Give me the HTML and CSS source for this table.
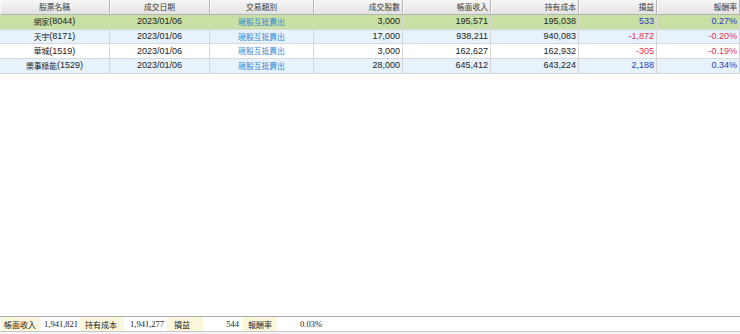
FILE: index.html
```html
<!DOCTYPE html>
<html lang="zh-Hant">
<head>
<meta charset="utf-8">
<title>現股互抵</title>
<link rel="stylesheet" href="styles.css">
</head>
<body>
<div class="page">
  <div class="grid">
    <div class="row head">
      <div class="cell c"><span class="cj">股票名稱</span></div>
      <div class="cell c"><span class="cj">成交日期</span></div>
      <div class="cell c"><span class="cj">交易類別</span></div>
      <div class="cell r"><span class="cj">成交股數</span></div>
      <div class="cell r"><span class="cj">帳面收入</span></div>
      <div class="cell r"><span class="cj">持有成本</span></div>
      <div class="cell r"><span class="cj">損益</span></div>
      <div class="cell r"><span class="cj">報酬率</span></div>
    </div>
    <div class="row sel">
      <div class="cell c"><span class="cj">網家</span>(8044)</div>
      <div class="cell c">2023/01/06</div>
      <div class="cell c link"><span class="cj">現股互抵賣出</span></div>
      <div class="cell r">3,000</div>
      <div class="cell r">195,571</div>
      <div class="cell r">195,038</div>
      <div class="cell r pos">533</div>
      <div class="cell r pos">0.27%</div>
    </div>
    <div class="row alt">
      <div class="cell c"><span class="cj">天宇</span>(8171)</div>
      <div class="cell c">2023/01/06</div>
      <div class="cell c link"><span class="cj">現股互抵賣出</span></div>
      <div class="cell r">17,000</div>
      <div class="cell r">938,211</div>
      <div class="cell r">940,083</div>
      <div class="cell r neg">-1,872</div>
      <div class="cell r neg">-0.20%</div>
    </div>
    <div class="row">
      <div class="cell c"><span class="cj">華城</span>(1519)</div>
      <div class="cell c">2023/01/06</div>
      <div class="cell c link"><span class="cj">現股互抵賣出</span></div>
      <div class="cell r">3,000</div>
      <div class="cell r">162,627</div>
      <div class="cell r">162,932</div>
      <div class="cell r neg">-305</div>
      <div class="cell r neg">-0.19%</div>
    </div>
    <div class="row alt">
      <div class="cell c"><span class="cj">樂事綠能</span>(1529)</div>
      <div class="cell c">2023/01/06</div>
      <div class="cell c link"><span class="cj">現股互抵賣出</span></div>
      <div class="cell r">28,000</div>
      <div class="cell r">645,412</div>
      <div class="cell r">643,224</div>
      <div class="cell r pos">2,188</div>
      <div class="cell r pos">0.34%</div>
    </div>
  </div>
  <div class="spacer"></div>
  <div class="footer">
    <div class="lbl l1">帳面收入</div>
    <div class="val v1">1,941,821</div>
    <div class="lbl l2">持有成本</div>
    <div class="val v2">1,941,277</div>
    <div class="lbl l3">損益</div>
    <div class="val v3">544</div>
    <div class="lbl l4">報酬率</div>
    <div class="val v4">0.03%</div>
  </div>
  <div class="bottom"></div>
</div>
</body>
</html>
```

FILE: styles.css
```css
html, body {
  margin: 0;
  padding: 0;
  background: #ffffff;
}

.page {
  width: 740px;
  height: 334px;
  display: flex;
  flex-direction: column;
  font-family: "Liberation Sans", "Noto Sans CJK TC", sans-serif;
  font-size: 9px;
  color: #222222;
}

.grid {
  display: flex;
  flex-direction: column;
}

.row {
  display: grid;
  grid-template-columns: 110px 100px 104px 89px 88px 88px 78px 83px;
  height: 14.7px;
  box-sizing: border-box;
  border-bottom: 1px solid #d3d9df;
}

.row.head {
  height: 15px;
  background: linear-gradient(#f7f7f7, #e3e3e3);
  border-bottom: 1px solid #b4b4b4;
  color: #3a3a3a;
}

.row.sel {
  background: #c8e0a3;
}

.row.alt {
  background: #e6f2fc;
}

.cell {
  display: flex;
  align-items: center;
  box-sizing: border-box;
  border-right: 1px solid #d5d5d5;
  white-space: nowrap;
  overflow: hidden;
  line-height: 1;
}

.row.head .cell {
  border-right: 1px solid #b8b8b8;
  box-shadow: inset 1px 0 0 #fbfbfb;
}

.cell.c {
  justify-content: center;
}

.cell.r {
  justify-content: flex-end;
  padding-right: 2px;
}

.cj {
  font-family: "Noto Sans CJK TC", sans-serif;
  font-size: 7.8px;
}

.link {
  color: #2c86d6;
}

.pos {
  color: #3434c8;
}

.neg {
  color: #e63248;
}

.spacer {
  flex: 1;
}

.footer {
  height: 16px;
  box-sizing: border-box;
  border-top: 1px solid #aaaaaa;
  border-bottom: 1px solid #c8c8c8;
  display: flex;
  align-items: stretch;
  font-family: "Liberation Serif", "Noto Sans CJK TC", serif;
  font-size: 8.5px;
  color: #222222;
}

.lbl,
.val {
  display: flex;
  align-items: center;
  white-space: nowrap;
  box-sizing: border-box;
}

.lbl {
  background: #fbf7dc;
  font-family: "Noto Sans CJK TC", sans-serif;
  font-size: 8px;
}

.l1 { margin-left: 1px; width: 39px; padding-left: 3px; }
.v1 { width: 40px; justify-content: flex-end; padding-right: 2px; }
.l2 { width: 44px; padding-left: 5px; }
.v2 { width: 43px; justify-content: flex-end; padding-right: 3px; }
.l3 { width: 36px; padding-left: 7px; }
.v3 { width: 39px; justify-content: flex-end; padding-right: 3px; }
.l4 { width: 35px; padding-left: 6px; }
.v4 { width: 48px; justify-content: flex-end; padding-right: 3px; }

.bottom {
  height: 2px;
  background: #f4f4f4;
}
```
